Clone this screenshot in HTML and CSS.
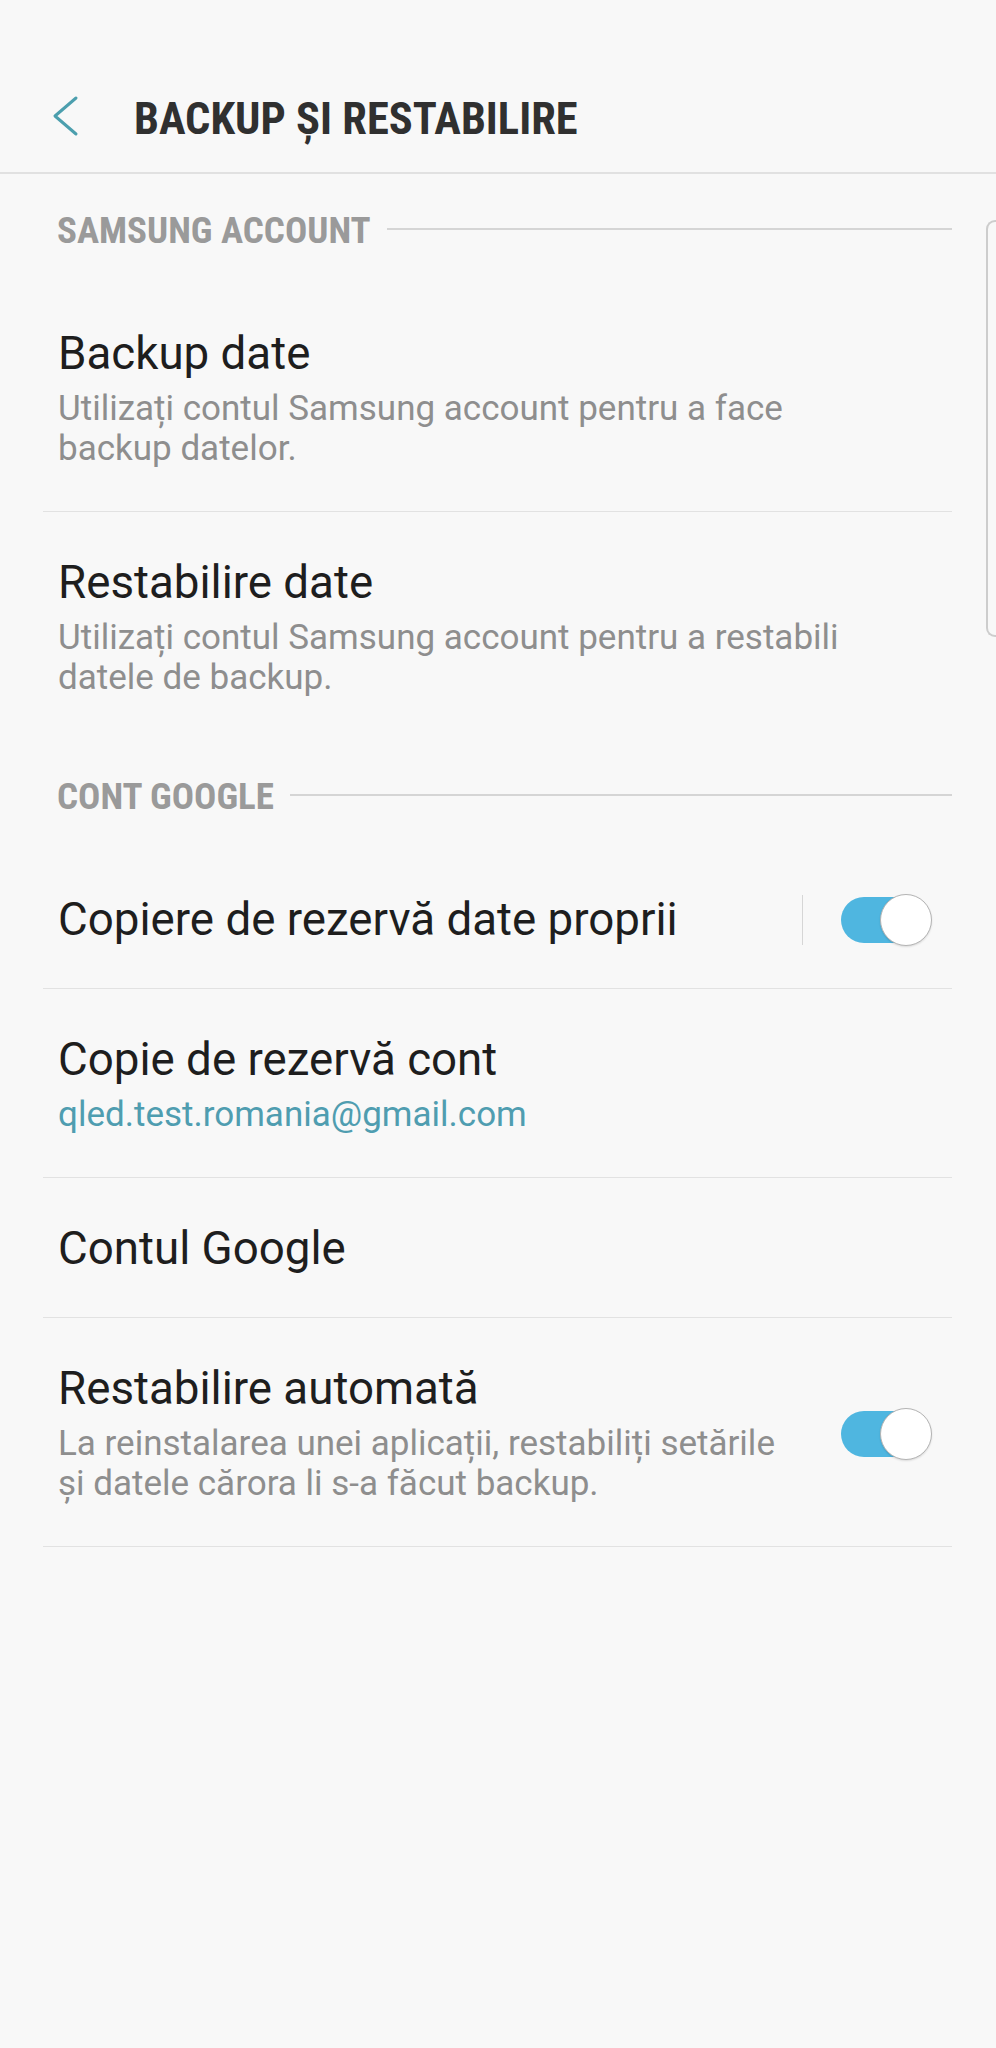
FILE: index.html
```html
<!DOCTYPE html>
<html lang="ro">
<head>
  <meta charset="UTF-8" />
  <meta name="viewport" content="width=device-width, initial-scale=1.0" />
  <title>Backup și restabilire</title>
  <link rel="stylesheet" href="styles.css">
</head>
<body>
  <div class="screen">
    <header class="app-bar">
      <button class="back" aria-label="Înapoi">
        <svg width="30" height="44" viewBox="0 0 30 44">
          <polyline points="26,4 5,22 26,40" fill="none" stroke="#4c9fae" stroke-width="3" stroke-linecap="round" stroke-linejoin="round" />
        </svg>
      </button>
      <h1 class="title"><span>BACKUP ȘI RESTABILIRE</span></h1>
    </header>

    <section class="group">
      <div class="group-title"><span>SAMSUNG ACCOUNT</span></div>

      <div class="item divided">
        <div class="item-main">
          <div class="item-title">Backup date</div>
          <div class="summary">Utilizați contul Samsung account pentru a face backup datelor.</div>
        </div>
      </div>

      <div class="item">
        <div class="item-main">
          <div class="item-title">Restabilire date</div>
          <div class="summary">Utilizați contul Samsung account pentru a restabili datele de backup.</div>
        </div>
      </div>
    </section>

    <section class="group">
      <div class="group-title"><span>CONT GOOGLE</span></div>

      <div class="item divided">
        <div class="item-main">
          <div class="item-title">Copiere de rezervă date proprii</div>
        </div>
        <div class="item-end">
          <span class="v-line"></span>
          <span class="switch on"></span>
        </div>
      </div>

      <div class="item divided">
        <div class="item-main">
          <div class="item-title">Copie de rezervă cont</div>
          <div class="summary accent">qled.test.romania@gmail.com</div>
        </div>
      </div>

      <div class="item divided">
        <div class="item-main">
          <div class="item-title">Contul Google</div>
        </div>
      </div>

      <div class="item divided">
        <div class="item-main">
          <div class="item-title">Restabilire automată</div>
          <div class="summary">La reinstalarea unei aplicații, restabiliți setările și datele cărora li s-a făcut backup.</div>
        </div>
        <div class="item-end">
          <span class="switch on"></span>
        </div>
      </div>
    </section>

    <div class="scroll-thumb"></div>
  </div>
</body>
</html>
```

FILE: styles.css
```css
html, body {
  margin: 0;
  padding: 0;
  background-color: #f8f8f8;
}

body {
  font-family: Roboto, "Noto Sans", sans-serif;
  color: #1e1e1e;
}

.screen {
  position: relative;
  width: 996px;
  min-height: 2048px;
  overflow: hidden;
}

/* top bar */
.app-bar {
  display: flex;
  align-items: center;
  padding: 93px 0 27px 50px;
  border-bottom: 2px solid #e1e1e1;
}

.back {
  display: block;
  width: 30px;
  height: 44px;
  margin: 0 0 6px 0;
  padding: 0;
  border: none;
  background: none;
}

.back svg {
  display: block;
}

.title {
  margin: 0 0 0 54px;
  font-family: "Roboto Condensed", Roboto, sans-serif;
  font-size: 44.5px;
  line-height: 52px;
  font-weight: 700;
  color: #303030;
}

/* groups */
.group-title {
  display: flex;
  align-items: center;
  gap: 16px;
  padding: 37px 44px 32px 57px;
  font-family: "Roboto Condensed", Roboto, sans-serif;
  font-size: 37px;
  line-height: 40px;
  font-weight: 700;
  color: #9a9a9a;
}

.group-title::after {
  content: "";
  flex: 1;
  height: 2px;
  margin-bottom: 4px;
  background-color: #d5d5d5;
}

.item {
  display: flex;
  align-items: center;
  margin: 0 44px 0 43px;
  padding: 45px 20px 42px 15px;
}

.item.divided {
  border-bottom: 1px solid #e2e2e2;
}

.item-main {
  flex: 1;
  min-width: 0;
  padding-right: 12px;
}

.item-title {
  font-size: 45.7px;
  line-height: 52px;
  color: #1e1e1e;
}

.summary {
  max-width: 806px;
  margin-top: 9px;
  font-size: 35px;
  line-height: 40px;
  color: #8e8e8e;
}

.summary.accent {
  color: #4f9db0;
}

.item-end {
  display: flex;
  align-items: center;
  width: 130px;
}

.v-line {
  width: 1px;
  height: 50px;
  background-color: #d6d6d6;
}

/* toggle */
.switch {
  position: relative;
  width: 91px;
  height: 52px;
  margin-left: auto;
}

.switch::before {
  content: "";
  position: absolute;
  left: 0;
  top: 3px;
  width: 84px;
  height: 46px;
  border-radius: 23px;
  background-color: #4fb6e0;
}

.switch::after {
  content: "";
  position: absolute;
  right: 0;
  top: 0;
  width: 50px;
  height: 50px;
  border: 1px solid #b4b4b4;
  border-radius: 50%;
  background-color: #fff;
  box-shadow: 0 1px 2px rgba(0, 0, 0, 0.12);
}

/* scroll indicator */
.scroll-thumb {
  position: absolute;
  top: 220px;
  right: 0;
  width: 8px;
  height: 413px;
  border: 2px solid #cdcdcd;
  border-right: none;
  border-radius: 9px 0 0 9px;
}
```
